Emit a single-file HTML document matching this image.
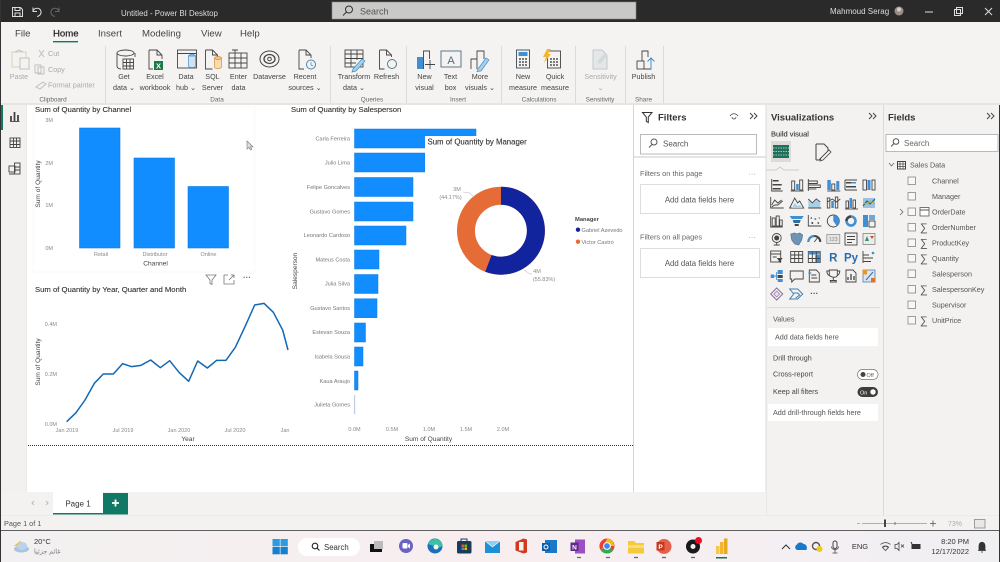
<!DOCTYPE html>
<html><head><meta charset="utf-8"><title>Power BI Desktop</title>
<style>
html,body{margin:0;padding:0;width:1000px;height:562px;overflow:hidden;background:#fff}
svg{display:block;filter:blur(.35px)}
text{font-family:"Liberation Sans","DejaVu Sans",sans-serif;fill:#444;font-size:7.3px}
.m{text-anchor:middle}.e{text-anchor:end}
.tab{font-size:9.6px;fill:#444}
.rl{font-size:7.2px;fill:#444;text-anchor:middle}
.gl{font-size:6.4px;fill:#666;text-anchor:middle}
.dis{fill:#aaa}
.t{font-size:7.7px;fill:#333;font-weight:normal;stroke:#333;stroke-width:.12px}
.ax{font-size:5.5px;fill:#888}
.sp{font-size:5.6px;fill:#777;text-anchor:end}
.atl{font-size:6.6px;fill:#444}
.h{font-size:9.5px;font-weight:bold;fill:#333}
.f{font-size:7.2px;fill:#555}
.p{font-size:7.4px;fill:#444}
.k{fill:none;stroke:#444;stroke-width:.9}
.g{fill:none;stroke:#bbb;stroke-width:.9}
.b{fill:#3f8fd2}
.d{fill:#444}
.cb{fill:#f7f7f7;stroke:#777;stroke-width:.7}
.sg{font-size:11px;fill:#555}
</style></head><body>
<svg width="1000" height="562" viewBox="0 0 1000 562" xmlns="http://www.w3.org/2000/svg">
<rect width="1000" height="562" fill="#f3f2f1"/>

<!-- title bar -->
<rect width="1000" height="22" fill="#2a2a2a"/>
<g fill="none" stroke="#ddd" stroke-width="1">
<path d="M12.5 7.5h8l2 2v7h-10z"/><path d="M15 7.5v3h5v-3M15 16.5v-3.5h5v3.5"/>
<path d="M33 7.5v4h4M33 11c1.500-3.500 7-4 8 .5.500 2.500-1.500 4.500-4 5"/>
<path stroke="#666" d="M59 7.500v4h-4M59 11c-1.500-3.500-7-4-8 .5-.5 2.500 1.500 4.500 4 5"/>
</g>
<text x="121" y="16" style="font-size:7.900px;fill:#ddd">Untitled - Power BI Desktop</text>
<rect x="332" y="2" width="304" height="17" fill="#c9c9c7" stroke="#8a8a8a" stroke-width=".6"/>
<circle cx="349" cy="9.500" r="3.500" fill="none" stroke="#333"/><path d="M346.500 12l-3.500 3.500" stroke="#333" fill="none"/>
<text x="360" y="14.500" style="font-size:9px;fill:#555">Search</text>
<text x="830" y="14" style="font-size:8px;fill:#ddd">Mahmoud Serag</text>
<circle cx="899" cy="11" r="4.500" fill="#9a8f88"/><circle cx="899" cy="9.500" r="2" fill="#d8cfc8"/>
<path d="M925 12h8" stroke="#ddd"/>
<rect x="954.500" y="9.500" width="6" height="6" fill="none" stroke="#ddd"/><rect x="956.500" y="7.500" width="6" height="6" fill="none" stroke="#ddd"/>
<path d="M985 8l7 7M992 8l-7 7" stroke="#ddd"/>

<!-- ribbon -->
<rect y="22" width="1000" height="83" fill="#f4f3f2"/>
<text x="15" y="36.500" class="tab">File</text>
<text x="53" y="36.500" class="tab" style="fill:#222;stroke:#222;stroke-width:.2px">Home</text>
<rect x="53" y="41" width="25" height="1.400" fill="#117865"/>
<text x="98" y="36.500" class="tab">Insert</text>
<text x="142" y="36.500" class="tab">Modeling</text>
<text x="201" y="36.500" class="tab">View</text>
<text x="240" y="36.500" class="tab">Help</text>

<!-- separators -->
<g stroke="#dcdbda" stroke-width="1">
<path d="M105.500 46v57M330.500 46v57M406.500 46v57M501.500 46v57M575.500 46v57M625.500 46v57M663.500 46v57"/>
</g>
<rect y="103" width="1000" height="2" fill="#e6e5e4"/>

<!-- clipboard -->
<g class="g"><rect x="12" y="52" width="14" height="15" stroke="#d8ccb5" fill="none"/><rect x="20" y="58" width="9" height="11" fill="#f4f3f2"/><path d="M15 52l4-2 4 2"/>
<path d="M39 50l5 7M44 50l-5 7"/><rect x="35" y="65" width="6" height="8"/><rect x="38" y="67" width="6" height="7"/><path d="M36 87l7-5 3 2-6 5z"/></g>
<text x="19" y="79" class="rl dis">Paste</text>
<text x="48" y="56" class="rl dis" style="text-anchor:start">Cut</text>
<text x="48" y="72" class="rl dis" style="text-anchor:start">Copy</text>
<text x="48" y="87.500" class="rl dis" style="text-anchor:start">Format painter</text>
<text x="53" y="101.500" class="gl">Clipboard</text>

<!-- Get data -->
<g class="k">
<path d="M117 53v13c0 2 2 3 4 3M135 53v4"/><ellipse cx="125.500" cy="53" rx="8.500" ry="3"/>
<rect x="123" y="59" width="10.500" height="10" fill="#f4f3f2"/><path d="M123 62.500h10.500M123 66h10.500M126.500 59v10M130 59v10"/>
<!-- Excel -->
<path d="M149 50h8l5 5v4M157 50v5h5M149 50v19h4"/>
<!-- Data hub -->
<rect x="177.500" y="50" width="19" height="18"/><path d="M177.500 53.500h19"/>
<!-- SQL -->
<path d="M205.500 50h7l5 5v2M212.500 50v5h5M205.500 50v19h7"/>
<!-- Enter data -->
<rect x="229" y="53" width="18" height="15"/><path d="M229 58h18M229 63h18M235 50v18M241 53v15M232 50h6"/>
<!-- Recent -->
<path d="M299 50h7l5 5v3M306 50v5h5M299 50v19h5"/>
<!-- Transform -->
<rect x="345" y="50" width="18" height="17"/><path d="M345 54h18M345 58.500h18M345 63h11M351 50v17M357 50v10"/>
<!-- Refresh -->
<path d="M379.500 50h7l5 5v2M386.500 50v5h5M379.500 50v19h5"/>
<!-- text box -->
<rect x="441" y="51" width="20" height="16" stroke="#4f6b80"/>
<!-- more visuals -->
<path d="M471 69v-10h6v10M477 69v-18h7v8"/>
<!-- measures -->
<rect x="516.500" y="50" width="13" height="18" stroke="#3a4a58"/>
<rect x="547.500" y="51" width="13" height="17"/>
<!-- Publish -->
<rect x="637" y="61" width="7" height="8"/><path d="M642 61v-10h6v6M644 69h7v-8"/>
</g>
<ellipse cx="192" cy="56" rx="3.500" ry="1.500" fill="#a8cfe8" stroke="#3f8fd2" stroke-width=".7"/><path d="M188.500 56v10c0 2 7 2 7 0V56z" fill="#cfe3f1" stroke="#3f8fd2" stroke-width=".7"/>
<path d="M214.500 58v9c0 2 7 2 7 0v-9z" fill="#f6dcb5" stroke="#d98e2f" stroke-width=".7"/><ellipse cx="218" cy="58" rx="3.500" ry="1.500" fill="#f0c48a" stroke="#d98e2f" stroke-width=".7"/>
<rect x="154" y="61" width="9" height="9" fill="#1d7a45"/><text x="158.500" y="68.500" class="m" style="font-size:7.500px;fill:#fff;font-weight:bold">X</text>
<g fill="none" stroke="#444"><ellipse cx="269.500" cy="59" rx="9.500" ry="8"/><ellipse cx="269.500" cy="59" rx="5.500" ry="4.500" stroke-width="1.300"/><circle cx="269.500" cy="59" r="1.800"/></g>
<circle cx="311" cy="64.500" r="4.500" fill="#f4f3f2" stroke="#4a86b3"/><path d="M311 62v3l2 1" stroke="#4a86b3" fill="none" stroke-width=".7"/>
<path d="M353 69l9-10 3 2-9 10-4 1z" fill="#a8cfe8" stroke="#3f8fd2" stroke-width=".7"/>
<circle cx="392" cy="64" r="4.500" fill="none" stroke="#4f7f88"/>
<rect x="417" y="57" width="6" height="12" fill="#3f8fd2"/><path d="M423.500 69V51h6v8M430 60v9M425 64.500h10" class="k"/>
<text x="451" y="64" class="m" style="font-size:11px;fill:#4f6b80">A</text>
<path d="M478 69l8-11 3 2-8 11-4 .5z" fill="#a8cfe8" stroke="#3f8fd2" stroke-width=".7"/>
<rect x="518.500" y="52" width="9" height="4" fill="#3f8fd2"/><path d="M519 59h8M519 62h8M519 65h8" stroke="#333" stroke-dasharray="2 1" stroke-width="1.300"/>
<path d="M550 62h8M550 65h8M550 59h8" stroke="#333" stroke-dasharray="2 1" stroke-width="1.300"/><path d="M547 49l-4 8h3l-2 6 7-9h-3l3-5z" fill="#f2b632"/>
<path d="M593 50h9l5 5v14h-14z" fill="#e4e7e8" stroke="#c3c8cb"/><path d="M597 62l8-9 3 2-8 9z" fill="#d4d8da"/>
<path d="M651 69v-11M647.500 61.500l3.500-3.500 3.500 3.500" fill="none" stroke="#3f8fd2"/>

<text x="124" y="79" class="rl">Get</text><text x="124" y="90" class="rl">data ⌄</text>
<text x="155" y="79" class="rl">Excel</text><text x="155" y="90" class="rl">workbook</text>
<text x="186" y="79" class="rl">Data</text><text x="186" y="90" class="rl">hub ⌄</text>
<text x="212.500" y="79" class="rl">SQL</text><text x="212.500" y="90" class="rl">Server</text>
<text x="238.500" y="79" class="rl">Enter</text><text x="238.500" y="90" class="rl">data</text>
<text x="269.500" y="79" class="rl">Dataverse</text>
<text x="305" y="79" class="rl">Recent</text><text x="305" y="90" class="rl">sources ⌄</text>
<text x="354" y="79" class="rl">Transform</text><text x="354" y="90" class="rl">data ⌄</text>
<text x="386.500" y="79" class="rl">Refresh</text>
<text x="424.500" y="79" class="rl">New</text><text x="424.500" y="90" class="rl">visual</text>
<text x="450.500" y="79" class="rl">Text</text><text x="450.500" y="90" class="rl">box</text>
<text x="480" y="79" class="rl">More</text><text x="480" y="90" class="rl">visuals ⌄</text>
<text x="523" y="79" class="rl">New</text><text x="523" y="90" class="rl">measure</text>
<text x="555" y="79" class="rl">Quick</text><text x="555" y="90" class="rl">measure</text>
<text x="600.500" y="79" class="rl dis">Sensitivity</text><text x="600.500" y="90" class="rl dis">⌄</text>
<text x="643.500" y="79" class="rl">Publish</text>
<text x="217" y="101.500" class="gl">Data</text>
<text x="372" y="101.500" class="gl">Queries</text>
<text x="458" y="101.500" class="gl">Insert</text>
<text x="539" y="101.500" class="gl">Calculations</text>
<text x="600" y="101.500" class="gl">Sensitivity</text>
<text x="643.500" y="101.500" class="gl">Share</text>

<!-- left nav -->
<rect x="0" y="105" width="27" height="387" fill="#f2f1f0"/>
<rect x="26.500" y="105" width="1" height="410" fill="#e3e2e1"/>
<rect x="1" y="105" width="2" height="25" fill="#117865"/>
<g class="k"><path d="M10 121.500h9.500"/><path d="M11 121v-5M14.500 121v-9M18 121v-6" stroke-width="1.800"/>
<rect x="10" y="138" width="10" height="9.500"/><path d="M10 141h10M10 144.500h10M13.500 138v9.500M16.500 138v9.500"/>
<rect x="9" y="166" width="6" height="6"/><rect x="14.500" y="163" width="5.500" height="11"/><path d="M15 167h5M15 170h5M9 174h6"/></g>

<!-- canvas -->
<rect x="27" y="105" width="606" height="387" fill="#fff"/>
<rect x="33" y="107" width="222" height="165" fill="none" stroke="#fafafa"/>
<text x="35" y="112" class="t">Sum of Quantity by Channel</text>
<text x="53" y="122" class="ax e">3M</text><text x="53" y="165" class="ax e">2M</text><text x="53" y="207" class="ax e">1M</text><text x="53" y="250" class="ax e">0M</text>
<text transform="translate(40,184) rotate(-90)" class="atl m">Sum of Quantity</text>
<g fill="#118dff" stroke="#0d7ddf" stroke-width=".6">
<rect x="79.500" y="128" width="40.500" height="120"/>
<rect x="134" y="158" width="40.500" height="90"/>
<rect x="188" y="186.500" width="40.500" height="61.500"/>
</g>
<text x="101" y="256" class="ax m">Retail</text><text x="155" y="256" class="ax m">Distributor</text><text x="208.500" y="256" class="ax m">Online</text>
<text x="155.500" y="265.500" class="atl m">Channel</text>
<path d="M247 141v8l2-1.500 1.500 2.500 1.300-.7-1.300-2.500h2.500z" fill="#ddd" stroke="#777" stroke-width=".6"/>

<!-- visual header icons -->
<path d="M206 275h10l-4 5v4.500l-2-1V280z" fill="none" stroke="#777" stroke-width=".8"/>
<path d="M228 275h-4v9h10v-4M229 280l5-5M231 275h3v3" fill="none" stroke="#777" stroke-width=".8"/>
<text x="247" y="280" class="m" style="font-size:8px;fill:#666;font-weight:bold">···</text>

<!-- line chart -->
<text x="35" y="292" class="t">Sum of Quantity by Year, Quarter and Month</text>
<text x="57" y="326" class="ax e">0.4M</text><text x="57" y="376" class="ax e">0.2M</text><text x="57" y="426" class="ax e">0.0M</text>
<text transform="translate(40,362) rotate(-90)" class="atl m">Sum of Quantity</text>
<g transform="translate(0,270) scale(.33333)"><path fill="none" stroke="#1268b5" stroke-width="4.500" stroke-linejoin="round" d="M200 455L228 428 255 390 283 340 310 312 340 312 368 281 395 290 423 286 452 270 481 293 509 272 537 307 566 334 593 273 622 294 650 271 678 271 706 232 735 170 764 105 792 100 820 127 848 180 864 240"/></g>
<text x="67" y="432" class="ax m">Jan 2019</text><text x="123" y="432" class="ax m">Jul 2019</text><text x="179" y="432" class="ax m">Jan 2020</text><text x="235" y="432" class="ax m">Jul 2020</text><text x="285" y="432" class="ax m">Jan</text>
<text x="188" y="441" class="atl m">Year</text>

<!-- salesperson chart -->
<text x="291" y="112" class="t">Sum of Quantity by Salesperson</text>
<g fill="#118dff" stroke="#0d7ddf" stroke-width=".5">
<rect x="354.500" y="129" width="121.500" height="19"/>
<rect x="354.500" y="153" width="70.500" height="19"/>
<rect x="354.500" y="177.500" width="58.500" height="19"/>
<rect x="354.500" y="202" width="58.500" height="19"/>
<rect x="354.500" y="226" width="51.500" height="19"/>
<rect x="354.500" y="250" width="24.500" height="19"/>
<rect x="354.500" y="274.500" width="23.500" height="19"/>
<rect x="354.500" y="298.700" width="22.500" height="19"/>
<rect x="354.500" y="323" width="11" height="19"/>
<rect x="354.500" y="347" width="8.500" height="19"/>
<rect x="354.500" y="371" width="3.500" height="19"/>
</g>
<rect x="354.500" y="395" width=".6" height="19" fill="#7a9cc0"/>
<text x="350" y="140.500" class="sp">Carla Ferreira</text>
<text x="350" y="164.500" class="sp">Julio Lima</text>
<text x="350" y="189" class="sp">Felipe Goncalves</text>
<text x="350" y="213.500" class="sp">Gustavo Gomes</text>
<text x="350" y="237" class="sp">Leonardo Cardoso</text>
<text x="350" y="261.500" class="sp">Mateus Costa</text>
<text x="350" y="285.500" class="sp">Julia Silva</text>
<text x="350" y="310" class="sp">Gustavo Santos</text>
<text x="350" y="334" class="sp">Estevan Souza</text>
<text x="350" y="358.500" class="sp">Isabela Sousa</text>
<text x="350" y="383" class="sp">Kaua Araujo</text>
<text x="350" y="406.500" class="sp">Julieta Gomes</text>
<text transform="translate(297,271) rotate(-90)" class="atl m">Salesperson</text>
<text x="354.500" y="431" class="ax m">0.0M</text><text x="392" y="431" class="ax m">0.5M</text><text x="429" y="431" class="ax m">1.0M</text><text x="466" y="431" class="ax m">1.5M</text><text x="503" y="431" class="ax m">2.0M</text>
<text x="428.500" y="441" class="atl m">Sum of Quantity</text>
<path d="M28 445.500H633" stroke="#333" stroke-width="1" stroke-dasharray="1 1"/>

<!-- donut -->
<rect x="425" y="136" width="150" height="100" fill="#fff"/>
<text x="427.500" y="144.500" class="t" style="font-size:7.800px">Sum of Quantity by Manager</text>
<circle cx="501" cy="230.700" r="35" fill="none" stroke="#e66c37" stroke-width="18"/>
<path d="M501 195.700A35 35 0 1 1 488.400 263.400" fill="none" stroke="#12239e" stroke-width="18"/>
<path d="M463 192l7 1 4 4M524 270l6 4h2" fill="none" stroke="#ccc" stroke-width=".7"/>
<text x="457" y="191" class="ax m">3M</text><text x="450.500" y="199" class="ax m">(44.17%)</text>
<text x="537" y="273" class="ax m">4M</text><text x="544" y="281" class="ax m">(55.83%)</text>
<text x="575" y="221" style="font-size:5.800px;fill:#444;font-weight:bold">Manager</text>
<circle cx="578" cy="229.700" r="2.200" fill="#12239e"/><text x="581.500" y="232" class="sp" style="text-anchor:start">Gabriel Azevedo</text>
<circle cx="578" cy="241.700" r="2.200" fill="#e66c37"/><text x="581.500" y="244" class="sp" style="text-anchor:start">Victor Castro</text>

<!-- filters pane -->
<rect x="633" y="105" width="133" height="387" fill="#fff"/>
<rect x="633" y="105" width="1" height="410" fill="#d5d4d3"/>
<path d="M642.500 112.500h9.500l-3.700 4.500v5.500l-2-1.200V117z" fill="none" stroke="#333"/>
<text x="658" y="120.500" class="h">Filters</text>
<path d="M730 116c2-3 6-3 8 0M732 117a2 2 0 0 0 4 0" fill="none" stroke="#444" stroke-width=".8"/>
<path d="M750 113l3 3-3 3M754 113l3 3-3 3" fill="none" stroke="#444"/>
<rect x="640.500" y="134.500" width="116" height="19.500" fill="#fff" stroke="#aaa" stroke-width=".8"/>
<circle cx="654" cy="142" r="3" fill="none" stroke="#555"/><path d="M652 144.500l-3 3" stroke="#555" fill="none"/>
<text x="663" y="146.500" style="font-size:8px;fill:#555">Search</text>
<rect x="634" y="156" width="132" height="2" fill="#e4e4e4"/>
<text x="640" y="176" class="p" style="fill:#666">Filters on this page</text>
<text x="752" y="176" class="m" style="font-size:7px;fill:#888">···</text>
<rect x="640.500" y="184.500" width="119" height="29" fill="#fff" stroke="#ddd"/>
<text x="699.500" y="202.500" class="m" style="font-size:7.800px;fill:#555">Add data fields here</text>
<text x="640" y="239.500" class="p" style="fill:#666">Filters on all pages</text>
<text x="752" y="239.500" class="m" style="font-size:7px;fill:#888">···</text>
<rect x="640.500" y="248.500" width="119" height="29" fill="#fff" stroke="#ddd"/>
<text x="699.500" y="266" class="m" style="font-size:7.800px;fill:#555">Add data fields here</text>

<!-- viz pane -->
<rect x="766" y="105" width="117" height="410" fill="#f3f2f1"/>
<rect x="765.500" y="105" width="1" height="410" fill="#dcdbda"/>
<rect x="883" y="105" width="1" height="410" fill="#dcdbda"/>
<text x="771" y="120.500" class="h">Visualizations</text>
<path d="M869 113l3 3-3 3M873 113l3 3-3 3M987 113l3 3-3 3M991 113l3 3-3 3" fill="none" stroke="#444"/>
<text x="771" y="136.500" style="font-size:7.500px;fill:#333;stroke:#333;stroke-width:.1px">Build visual</text>
<rect x="771" y="141" width="20" height="21" fill="#dcdbda"/>
<rect x="773" y="145" width="16" height="13" fill="#1f6f5c"/><path d="M773 148h16M773 151.500h16M773 155h16" stroke="#cfe3dc" stroke-dasharray="1.500 1" stroke-width=".8"/>
<path d="M816 144h8l4 4v3M816 144v16M816 160l3 0 9-9" fill="none" stroke="#444"/><path d="M821 158l8-8 2 2-8 8-3 1z" fill="#f3f2f1" stroke="#444" stroke-width=".8"/>
<path d="M766 170h10l4-3 4 3h15" fill="none" stroke="#ccc"/>

<!-- viz icon grid -->
<g transform="translate(776.700,185)"><path class="k" d="M-5-6V6H6"/><path class="d" d="M-4-5H2v1.500H-4zM-4-1H5V.5H-4zM-4 3H4V4.500H-4z"/></g>
<g transform="translate(796.700,185)"><rect class="k" x="-5" y="-4" width="3" height="9"/><rect class="b" x="-.5" y="-1" width="2.500" height="6"/><rect class="k" x="3" y="-5" width="3" height="10"/><path class="k" d="M-6 6H7"/></g>
<g transform="translate(814.300,185)"><path class="k" d="M-6-6V6M-6-4H3v2.500H-6M-6 0H6v2.500H-6"/><path class="k" d="M-6 4H2"/></g>
<g transform="translate(833.300,185)"><rect class="b" x="-6" y="-5" width="3.500" height="10"/><rect class="k" x="-1.500" y="-1" width="3" height="6"/><rect class="b" x="3" y="-4" width="3" height="9"/><path class="k" d="M-6 6H7"/></g>
<g transform="translate(851,185)"><path class="k" d="M-6-5H6M-6 5H6M-6-5V5"/><rect class="d" x="-5" y="-3" width="10" height="1.500"/><rect class="d" x="-5" y="1" width="10" height="1.500"/><rect class="b" x="0" y="-3" width="5" height="1.500"/></g>
<g transform="translate(869,185)"><rect class="k" x="-6" y="-5" width="3.500" height="10"/><rect class="b" x="-1.500" y="-5" width="3" height="10"/><rect class="k" x="3" y="-5" width="3" height="10"/></g>

<g transform="translate(776.700,203)"><path class="k" d="M-6-6V5H7M-5 2l3-5 3 3 4-3M-5 4l3-2 3 0 5-4"/></g>
<g transform="translate(796.700,203)"><path class="k" d="M-7 5L-2-5 1 0 3-2 7 5z"/><path fill="#a8cfe8" d="M-5 5l3-5 3 3 2-1 3 3z"/></g>
<g transform="translate(814.300,203)"><path fill="#a8cfe8" d="M-6 5V-3l4 4 4-4 4 3v5z"/><path class="k" d="M-6-4l4 4 4-4 4 3M-6 5H7"/></g>
<g transform="translate(833.300,203)"><rect class="k" x="-6" y="-5" width="2.500" height="10"/><rect class="b" x="-2" y="-2" width="2.500" height="7"/><rect class="k" x="2" y="-6" width="2.500" height="11"/><path class="k" d="M-6-1l5-3 4 3 4-3"/></g>
<g transform="translate(851,203)"><rect class="k" x="-5" y="-2" width="2.500" height="7"/><rect class="b" x="-1.500" y="-5" width="2.500" height="10"/><rect class="k" x="2" y="-3" width="2.500" height="8"/><path class="k" d="M-6 6H7"/></g>
<g transform="translate(869,203)"><rect x="-6" y="-5" width="12" height="10" fill="#9ac3e3"/><path d="M-6 3l4-5 3 3 5-5" fill="none" stroke="#1f6f5c" stroke-width="1.100"/><path d="M-6 0l4 1 3-3 5 3" fill="none" stroke="#d9a32e"/></g>

<g transform="translate(776.700,221)"><path class="k" d="M-6-5V6H6"/><rect class="k" x="-4.500" y="-3" width="3" height="8"/><rect class="k" x="-.5" y="-5" width="3" height="10"/><rect class="k" x="3" y="-1" width="2.500" height="6"/></g>
<g transform="translate(796.700,221)"><path class="b" d="M-7-5H7L5-2H-5z"/><path d="M-4-1H4L3 2H-3z" fill="#2f6f9f"/><path class="d" d="M-2 3H2V5H-2z"/></g>
<g transform="translate(814.300,221)"><path class="k" d="M-6-6V5H7"/><circle cx="-2" cy="2" r="1" class="d"/><circle cx="1" cy="-2" r="1" class="b"/><circle cx="4" cy="2" r=".9" class="d"/><circle cx="-3" cy="-3" r=".8" class="d"/><circle cx="5" cy="-3" r=".8" class="b"/></g>
<g transform="translate(833.300,221)"><circle r="6" class="k"/><path d="M0 0V-6A6 6 0 0 1 3.500 5z" class="b"/></g>
<g transform="translate(851,221)"><circle r="4.500" fill="none" stroke="#3f8fd2" stroke-width="2.500"/><path d="M0-4.500A4.500 4.500 0 0 0-4.500 0" fill="none" stroke="#444" stroke-width="2.500"/></g>
<g transform="translate(869,221)"><rect x="-6" y="-6" width="5" height="12" fill="#3f8fd2"/><rect x="0" y="-6" width="6" height="5" fill="#6aa9d9"/><rect x="0" y="0" width="6" height="6" class="k"/></g>

<g transform="translate(776.700,239)"><circle cy="-1" r="4.500" class="k"/><circle cy="-1" r="2.500" class="d"/><path class="k" d="M0 3.500V6M-3 6H3"/></g>
<g transform="translate(796.700,239)"><path d="M-6-5l4-1 2 1 3-1 3 2-1 5-3 5-4-1-3-4z" fill="#6f93b5" stroke="#4a6a88" stroke-width=".6"/></g>
<g transform="translate(814.300,239)"><path d="M-6 3a6 6 0 0 1 12 0" fill="none" stroke="#444" stroke-width="2"/><path d="M-6 3a6 6 0 0 1 6-6" fill="none" stroke="#3f8fd2" stroke-width="2"/><path class="k" d="M0 3l3-4"/></g>
<g transform="translate(833.300,239)"><rect x="-6.500" y="-4.500" width="13" height="9" fill="#e4e4e3" stroke="#888" stroke-width=".7"/><text x="0" y="2" class="m" style="font-size:5px;fill:#888">123</text></g>
<g transform="translate(851,239)"><rect x="-6" y="-6" width="12" height="12" class="k"/><path class="k" d="M-4-2.500H4M-4 .5H4M-4 3.500H1"/></g>
<g transform="translate(869,239)"><rect x="-6" y="-5.500" width="12" height="11" fill="#e8efe8" stroke="#777" stroke-width=".7"/><path d="M-4 2l2-5 2 5z" fill="#3f8f6f"/><path d="M1-3l2 3 2-3z" fill="#cc4d3b"/></g>

<g transform="translate(776.700,257)"><rect x="-6" y="-6" width="10" height="11" class="k"/><path class="k" d="M-6-3H4M-4 0H0"/><path class="d" d="M0 1h6l-2 2.500V6l-2-1V3.500z"/></g>
<g transform="translate(796.700,257)"><rect x="-6" y="-5.500" width="12" height="11" class="k"/><path class="k" d="M-6-2H6M-6 1.500H6M-2-5.500v11M2-5.500v11"/></g>
<g transform="translate(814.300,257)"><rect x="-6" y="-5.500" width="12" height="11" class="k"/><rect x="-6" y="-5.500" width="12" height="3" fill="#3f8fd2"/><rect x="1" y="-2" width="5" height="7.500" fill="#3f8fd2"/><path class="k" d="M-6 1.500H6M-2-5.500v11M2-5.500v11"/></g>
<text x="833.300" y="261.500" class="m" style="font-size:11.500px;font-weight:bold;fill:#2b6cb0">R</text>
<text x="851" y="261.500" class="m" style="font-size:11.500px;font-weight:bold;fill:#2b6cb0">Py</text>
<g transform="translate(869,257)"><path class="k" d="M-6-6V6M-6-2H0M-6 1H4M-6 4.500H2"/><circle cx="4" cy="-4" r="1.300" fill="#3f8fd2"/></g>

<g transform="translate(776.700,276)"><rect x="-6" y="-1.500" width="3.500" height="3.500" class="b"/><path d="M-2.500 0H0M0-4V4" fill="none" stroke="#3f8fd2"/><rect x="1" y="-6" width="5" height="4" class="b"/><rect x="1" y="-1" width="5" height="3" class="d"/><rect x="1" y="3" width="5" height="3" class="b"/></g>
<g transform="translate(796.700,276)"><path class="k" d="M-6.500-5H6.500V3H-2l-3 3V3H-6.500z"/></g>
<g transform="translate(814.300,276)"><path class="k" d="M-5-6H2L5-3V6H-5zM-3-1H2M-3 2H3"/><path d="M-6-3h3M-4.500-4.500v3" stroke="#3f8fd2" fill="none"/></g>
<g transform="translate(833.300,276)"><path class="k" d="M-4-6H4V-1C4 2-2 2-4-1zM-4-5H-6.500C-6.500-2-5-1-3.500 0M4-5H6.500C6.500-2 5-1 3.500 0M0 1.500V4M-3 6V4.500H3V6z" stroke-width="1.100"/></g>
<g transform="translate(851,276)"><path class="k" d="M-5-6H2L5-3V6H-5z"/><path d="M-3 4V1M0 4V-2M3 4V0" stroke="#444" stroke-width="1.300" fill="none"/></g>
<g transform="translate(869,276)"><rect x="-6" y="-6" width="12" height="12" fill="#d9e6f2" stroke="#3f6f98" stroke-width=".7"/><rect x="-6.500" y="-6.500" width="4.500" height="5" fill="#e2982b"/><rect x="2" y="2" width="4.500" height="4.500" fill="#d6762a"/><path d="M-3 4L4-4" stroke="#3f6f98" fill="none"/></g>

<g transform="translate(776.700,294)"><path d="M0-6L6 0 0 6-6 0z" fill="none" stroke="#8a6c9c"/><path d="M-3 0L0-3 3 0 0 3z" fill="#e8dcee" stroke="#8a6c9c" stroke-width=".6"/></g>
<g transform="translate(796.700,294)"><path d="M-7-5H1L6 0 1 5H-7L-3 0z" fill="none" stroke="#3f7fb5"/><path d="M-3-1L1-1 3 1-1 4" fill="none" stroke="#3f7fb5"/></g>
<text x="814.300" y="296" class="m" style="font-size:8px;font-weight:bold;fill:#444">···</text>

<rect x="767" y="307" width="113" height="1" fill="#dcdbda"/>
<text x="773" y="321.500" class="f">Values</text>
<rect x="768" y="328" width="110" height="18" fill="#fff"/>
<text x="775" y="339.500" class="f">Add data fields here</text>
<text x="773" y="360.500" class="f" style="fill:#444">Drill through</text>
<text x="773" y="376.500" class="f" style="fill:#444">Cross-report</text>
<rect x="857.500" y="369.500" width="20.500" height="10" rx="5" fill="#fff" stroke="#777" stroke-width=".7"/>
<circle cx="863" cy="374.500" r="2.500" fill="#444"/><text x="866.500" y="376.800" style="font-size:5.500px;fill:#666">Off</text>
<text x="773" y="394" class="f" style="fill:#444">Keep all filters</text>
<rect x="857.500" y="387" width="20.500" height="10" rx="5" fill="#3d3d3d"/>
<circle cx="873" cy="392" r="2.700" fill="#fff"/><text x="860" y="394.300" style="font-size:5.500px;fill:#fff">On</text>
<rect x="768" y="404" width="110" height="17" fill="#fff"/>
<text x="773" y="415" class="f">Add drill-through fields here</text>

<!-- fields pane -->
<text x="888" y="120.500" class="h">Fields</text>
<rect x="886" y="134.500" width="112" height="17" fill="#fff" stroke="#aaa" stroke-width=".8"/>
<circle cx="896" cy="141.500" r="2.800" fill="none" stroke="#555"/><path d="M894 143.500l-3 3" stroke="#555" fill="none"/>
<text x="904" y="146" style="font-size:8px;fill:#666">Search</text>
<path d="M889 163l2.500 3 2.500-3" fill="none" stroke="#666" stroke-width=".8"/>
<rect x="897.500" y="161.500" width="8" height="7.500" fill="#fff" stroke="#444"/><path d="M897.500 164h8M897.500 166.500h8M900 161.500v7.500M903 161.500v7.500" stroke="#444" stroke-width=".7" fill="none"/>
<text x="910" y="167.500" class="f" style="fill:#555">Sales Data</text>
<g>
<rect class="cb" x="908" y="177" width="7.500" height="7.500"/><text x="932" y="183.500" class="f">Channel</text>
<rect class="cb" x="908" y="192.500" width="7.500" height="7.500"/><text x="932" y="199" class="f">Manager</text>
<path d="M900 209l3 3-3 3" fill="none" stroke="#666" stroke-width=".8"/>
<rect class="cb" x="908" y="208" width="7.500" height="7.500"/><rect x="920" y="207.500" width="9" height="8.500" fill="#fff" stroke="#555" stroke-width=".8"/><path d="M920 210h9" stroke="#555"/>
<text x="932" y="214.500" class="f">OrderDate</text>
<rect class="cb" x="908" y="223.500" width="7.500" height="7.500"/><text x="920" y="231" class="sg">∑</text><text x="932" y="230" class="f">OrderNumber</text>
<rect class="cb" x="908" y="239" width="7.500" height="7.500"/><text x="920" y="246.500" class="sg">∑</text><text x="932" y="245.500" class="f">ProductKey</text>
<rect class="cb" x="908" y="254.500" width="7.500" height="7.500"/><text x="920" y="262" class="sg">∑</text><text x="932" y="261" class="f">Quantity</text>
<rect class="cb" x="908" y="270" width="7.500" height="7.500"/><text x="932" y="276.500" class="f">Salesperson</text>
<rect class="cb" x="908" y="285.500" width="7.500" height="7.500"/><text x="920" y="293" class="sg">∑</text><text x="932" y="292" class="f">SalespersonKey</text>
<rect class="cb" x="908" y="301" width="7.500" height="7.500"/><text x="932" y="307.500" class="f">Supervisor</text>
<rect class="cb" x="908" y="316.500" width="7.500" height="7.500"/><text x="920" y="324" class="sg">∑</text><text x="932" y="323" class="f">UnitPrice</text>
</g>

<!-- page tabs -->
<rect x="0" y="492" width="766" height="23" fill="#f3f2f1"/>
<path d="M34 501l-2 2 2 2M46 501l2 2-2 2" fill="none" stroke="#bbb"/>
<rect x="53" y="492" width="50" height="22" fill="#fff"/>
<rect x="53" y="513" width="50" height="1.500" fill="#117865"/>
<text x="78" y="506.500" class="m" style="font-size:8px;fill:#333">Page 1</text>
<rect x="103" y="493" width="25" height="21.500" fill="#117865"/>
<path d="M115.500 499.500v7M112 503h7" stroke="#fff" stroke-width="1.800"/>

<!-- status bar -->
<rect y="515" width="1000" height="15" fill="#f3f2f1"/>
<rect y="515" width="1000" height=".7" fill="#e9e8e7"/>
<text x="4" y="526" style="font-size:7.300px;fill:#555">Page 1 of 1</text>
<path d="M857 523.500h3M862 523.500h65" stroke="#999" stroke-width=".8"/>
<rect x="884" y="519.500" width="2" height="7.500" fill="#444"/><rect x="894.500" y="522" width="1" height="3" fill="#777"/>
<path d="M930 523.500h6M933 520.500v6" stroke="#555" stroke-width=".8"/>
<text x="955" y="526" class="m" style="font-size:7px;fill:#aaa">73%</text>
<rect x="974.500" y="519.500" width="10.500" height="8.500" fill="#e8e8e8" stroke="#888" stroke-width=".8"/>

<!-- taskbar -->
<defs><linearGradient id="tb" x1="0" x2="1" y1="0" y2="0"><stop offset="0" stop-color="#f2f0f0"/><stop offset=".5" stop-color="#f8eef0"/><stop offset=".75" stop-color="#f5eff2"/><stop offset="1" stop-color="#f0eff2"/></linearGradient></defs>
<rect y="531" width="1000" height="31" fill="url(#tb)"/>
<rect y="530" width="1000" height="1" fill="#5f5f5f"/>
<rect x="0" y="0" width="1" height="562" fill="#333"/>
<rect x="999" y="105" width="1" height="457" fill="#333"/>

<path d="M14 546l6-5 5 4z" fill="#f2b632"/><ellipse cx="21.500" cy="549" rx="7.500" ry="3.500" fill="#a9c4e0"/><ellipse cx="22" cy="546" rx="5" ry="4" fill="#bcd2e8"/>
<text x="34" y="544" style="font-size:7.500px;fill:#333">20°C</text>
<text x="34" y="553.500" style="font-size:6.500px;fill:#777">غائم جزئيا</text>

<rect x="272.500" y="539" width="7.300" height="7.300" fill="#2a9be0"/><rect x="280.500" y="539" width="7.300" height="7.300" fill="#2a9be0"/><rect x="272.500" y="547" width="7.300" height="7.300" fill="#1680cc"/><rect x="280.500" y="547" width="7.300" height="7.300" fill="#1680cc"/>
<rect x="298" y="538" width="62" height="18" rx="9" fill="#fff"/>
<circle cx="315" cy="546" r="2.800" fill="none" stroke="#222" stroke-width="1.100"/><path d="M317 548l2.500 2.500" stroke="#222" stroke-width="1.100"/>
<text x="324" y="550" style="font-size:7.800px;fill:#333">Search</text>

<rect x="370" y="544" width="12" height="8" fill="#111"/><rect x="374" y="541" width="9" height="8" fill="#bbb"/>
<circle cx="406" cy="546" r="7" fill="#6a62c4"/><rect x="402.500" y="543" width="5" height="5.500" fill="#fff" rx="1"/><path d="M408 545l2-1.500v5l-2-1.500z" fill="#fff"/>
<circle cx="435" cy="546" r="7.500" fill="#1c6fb8"/><path d="M428 544a7.500 7.500 0 0 1 14.500 1c-1 3-5 3-7 1.500z" fill="#3bc2a0"/><circle cx="436" cy="547" r="2.500" fill="#f7f0f0"/>
<rect x="457" y="541" width="14.500" height="12.500" rx="1.500" fill="#1b3a5c"/><path d="M461 541v-2h6v2" fill="none" stroke="#1b3a5c"/><rect x="461.500" y="544.500" width="2.500" height="2.500" fill="#e8552c"/><rect x="464.500" y="544.500" width="2.500" height="2.500" fill="#7fba00"/><rect x="461.500" y="547.500" width="2.500" height="2.500" fill="#2a9be0"/><rect x="464.500" y="547.500" width="2.500" height="2.500" fill="#ffb900"/>
<rect x="485" y="541" width="15" height="12" fill="#1f8fd6"/><path d="M485 541l7.500 6 7.500-6" fill="#8fd0f2" stroke="#fff" stroke-width=".6"/>
<path d="M515.500 542l8-3.500 3.500 1v13l-3.500 1-8-3z" fill="#d13a1f"/><rect x="519" y="542" width="4.500" height="8.500" fill="#f7f0f0"/>
<rect x="545" y="540" width="12" height="13" fill="#1b78c9"/><rect x="542" y="543" width="8" height="8" fill="#0f5ea8"/><circle cx="546" cy="547" r="2" fill="none" stroke="#fff"/>
<rect x="575" y="539.500" width="10" height="14" fill="#9c4fc0"/><rect x="570.500" y="542.500" width="8" height="8.500" fill="#5e2a8f"/><text x="574.500" y="549.500" class="m" style="font-size:6.500px;fill:#fff;font-weight:bold">N</text>
<circle cx="607" cy="546" r="7.500" fill="#ea4335"/><path d="M607 546l6.500 3.700a7.500 7.500 0 0 1-13 0z" fill="#34a853"/><path d="M607 546l-6.500 3.700 7-11.200a7.500 7.500 0 0 1 6.500 7.500z" fill="#fbbc05"/><path d="M600.500 549.700a7.500 7.500 0 0 1 0-7.500l3 5z" fill="#ea4335"/><circle cx="607" cy="546" r="3.400" fill="#4285f4" stroke="#fff" stroke-width="1"/>
<path d="M628 541h6l2 2h8v10.500h-16z" fill="#f5c93c"/><rect x="628" y="545" width="16" height="3" fill="#f9dd7a"/>
<circle cx="664" cy="546.500" r="7.500" fill="#e6614a"/><rect x="656.500" y="542" width="8" height="8.500" fill="#c5391f"/><text x="660.500" y="549" class="m" style="font-size:6.500px;fill:#fff;font-weight:bold">P</text>
<circle cx="693" cy="546.500" r="7" fill="#1a1a1a"/><circle cx="693" cy="546.500" r="2.500" fill="#eee"/><circle cx="698.500" cy="540.500" r="3.500" fill="#e81123"/>
<rect x="716" y="546" width="3.500" height="8" fill="#f2c94c"/><rect x="720" y="542" width="3.500" height="12" fill="#f2b632"/><rect x="724" y="538.500" width="3.500" height="15.500" fill="#e8a820"/>
<path d="M577 557.500h4M606 557.500h4M634 557.500h4M662 557.500h4M691 557.500h4" stroke="#666" stroke-width="1.200"/>
<rect x="716" y="557" width="11" height="1.500" fill="#1f6f5c"/>

<path d="M782 549l4-4 4 4" fill="none" stroke="#333"/>
<path d="M797 550a3 3 0 0 1 0-5.500c1-2.500 5-2.500 6.500-.5 3 0 4 3.500 3 6z" fill="#1b78c9"/>
<circle cx="816" cy="546" r="3.500" fill="none" stroke="#555" stroke-width="1.400"/><circle cx="819.500" cy="549" r="3" fill="#f2c811"/>
<rect x="833" y="541" width="4" height="7.500" rx="2" fill="none" stroke="#444"/><path d="M831.500 546.500c0 4 7 4 7 0M835 550v2.500M832.500 553h5" fill="none" stroke="#444" stroke-width=".8"/>
<text x="860" y="549" class="m" style="font-size:7.500px;fill:#333">ENG</text>
<path d="M880.500 544.500c3-2.500 7-2.500 10 0M882.500 547c2-1.500 4-1.500 6 0M885.500 550.500l-3-3 3-1.500 3 1.500z" fill="none" stroke="#444" stroke-width=".8"/>
<path d="M895 544.500h2l2-2v8l-2-2h-2zM901 544.500l3 3M904 544.500l-3 3" fill="none" stroke="#444" stroke-width=".8"/>
<rect x="911.500" y="544" width="9" height="5" fill="#333"/><path d="M912 544l-1-2" stroke="#333"/>
<text x="969" y="544" class="e" style="font-size:7.500px;fill:#333">8:20 PM</text>
<text x="969" y="554" class="e" style="font-size:7.500px;fill:#333">12/17/2022</text>
<path d="M979 550v-4c0-5 6-5 6 0v4zM978 550.500h8M981 552h2" fill="#333" stroke="#333" stroke-width=".8"/>
</svg>
</body></html>
